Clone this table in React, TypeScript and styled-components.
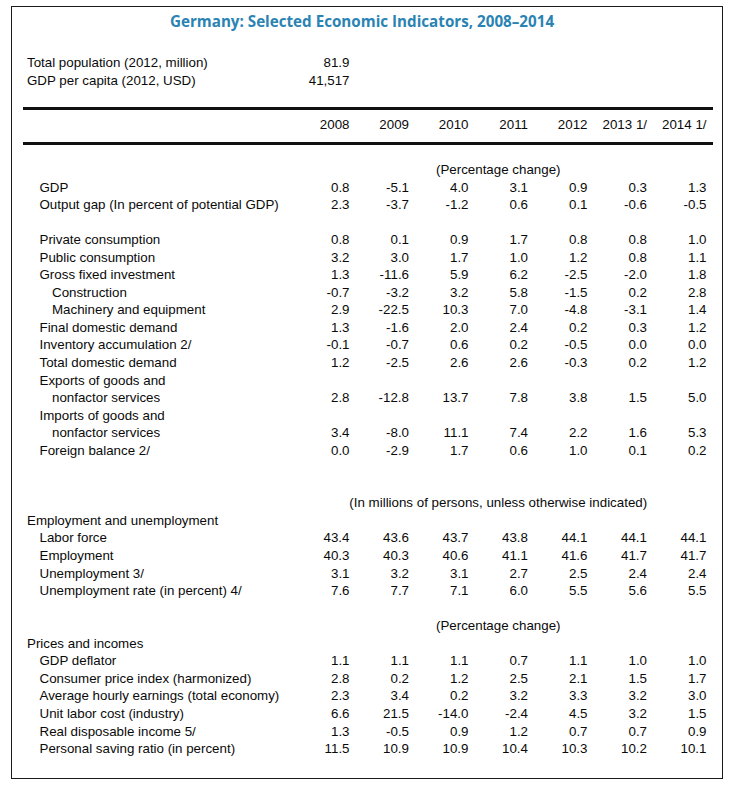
import React from "react";
import styled, { createGlobalStyle } from "styled-components";

const Global = createGlobalStyle`
  html, body { margin: 0; padding: 0; background: #fff; }
  body { font-family: "Liberation Sans", Arial, sans-serif; color: #0a0a0a; }
`;

const Frame = styled.div`
  box-sizing: border-box;
  margin: 6px 0 0 11px;
  width: 712px;
  height: 773px;
  border: 1px solid #1a1a1a;
  padding: 4px 9px 0 11px;
`;

const Title = styled.h1`
  margin: 0;
  font-family: "Open Sans", "Noto Sans", sans-serif;
  font-weight: 700;
  font-size: 15.2px;
  line-height: 20px;
  color: #2a83b3;
  text-align: center;
  padding-right: 12px;
`;

const Stats = styled.div`
  margin-top: 23px;
`;

const Grid = styled.div<{ $h?: number }>`
  display: grid;
  grid-template-columns: 267px repeat(7, 59.5px);
  font-size: 13.33px;
  line-height: ${(p) => p.$h ?? 17.55}px;
  height: ${(p) => p.$h ?? 17.55}px;
  white-space: nowrap;
`;

const Label = styled.div<{ $indent?: number }>`
  padding-left: ${(p) => 4 + (p.$indent ?? 0) * 12.5}px;
`;

const Cell = styled.div`
  text-align: right;
`;

const Note = styled.div`
  grid-column: 2 / -1;
  text-align: center;
`;

const Rule = styled.div<{ $top: number }>`
  height: 3px;
  background: #111;
  margin-top: ${(p) => p.$top}px;
`;

const Body = styled.div`
  margin-top: 16px;
`;

type Row =
  | { kind: "data"; label: string; indent: number; values?: string[] }
  | { kind: "note"; text: string }
  | { kind: "blank" };

const d = (label: string, indent: number, v?: string): Row => ({
  kind: "data",
  label,
  indent,
  values: v ? v.split(" ") : undefined,
});
const note = (text: string): Row => ({ kind: "note", text });
const blank: Row = { kind: "blank" };

const rows: Row[] = [
  note("(Percentage change)"),
  d("GDP", 1, "0.8 -5.1 4.0 3.1 0.9 0.3 1.3"),
  d("Output gap (In percent of potential GDP)", 1, "2.3 -3.7 -1.2 0.6 0.1 -0.6 -0.5"),
  blank,
  d("Private consumption", 1, "0.8 0.1 0.9 1.7 0.8 0.8 1.0"),
  d("Public consumption", 1, "3.2 3.0 1.7 1.0 1.2 0.8 1.1"),
  d("Gross fixed investment", 1, "1.3 -11.6 5.9 6.2 -2.5 -2.0 1.8"),
  d("Construction", 2, "-0.7 -3.2 3.2 5.8 -1.5 0.2 2.8"),
  d("Machinery and equipment", 2, "2.9 -22.5 10.3 7.0 -4.8 -3.1 1.4"),
  d("Final domestic demand", 1, "1.3 -1.6 2.0 2.4 0.2 0.3 1.2"),
  d("Inventory accumulation 2/", 1, "-0.1 -0.7 0.6 0.2 -0.5 0.0 0.0"),
  d("Total domestic demand", 1, "1.2 -2.5 2.6 2.6 -0.3 0.2 1.2"),
  d("Exports of goods and", 1),
  d("nonfactor services", 2, "2.8 -12.8 13.7 7.8 3.8 1.5 5.0"),
  d("Imports of goods and", 1),
  d("nonfactor services", 2, "3.4 -8.0 11.1 7.4 2.2 1.6 5.3"),
  d("Foreign balance 2/", 1, "0.0 -2.9 1.7 0.6 1.0 0.1 0.2"),
  blank,
  blank,
  note("(In millions of persons, unless otherwise indicated)"),
  d("Employment and unemployment", 0),
  d("Labor force", 1, "43.4 43.6 43.7 43.8 44.1 44.1 44.1"),
  d("Employment", 1, "40.3 40.3 40.6 41.1 41.6 41.7 41.7"),
  d("Unemployment 3/", 1, "3.1 3.2 3.1 2.7 2.5 2.4 2.4"),
  d("Unemployment rate (in percent) 4/", 1, "7.6 7.7 7.1 6.0 5.5 5.6 5.5"),
  blank,
  note("(Percentage change)"),
  d("Prices and incomes", 0),
  d("GDP deflator", 1, "1.1 1.1 1.1 0.7 1.1 1.0 1.0"),
  d("Consumer price index (harmonized)", 1, "2.8 0.2 1.2 2.5 2.1 1.5 1.7"),
  d("Average hourly earnings (total economy)", 1, "2.3 3.4 0.2 3.2 3.3 3.2 3.0"),
  d("Unit labor cost (industry)", 1, "6.6 21.5 -14.0 -2.4 4.5 3.2 1.5"),
  d("Real disposable income 5/", 1, "1.3 -0.5 0.9 1.2 0.7 0.7 0.9"),
  d("Personal saving ratio (in percent)", 1, "11.5 10.9 10.9 10.4 10.3 10.2 10.1"),
];

const years = ["2008", "2009", "2010", "2011", "2012", "2013 1/", "2014 1/"];

export default function App() {
  return (
    <>
      <Global />
      <Frame>
        <Title>Germany: Selected Economic Indicators, 2008–2014</Title>
        <Stats>
          <Grid $h={18}>
            <Label>Total population (2012, million)</Label>
            <Cell>81.9</Cell>
          </Grid>
          <Grid $h={18}>
            <Label>GDP per capita (2012, USD)</Label>
            <Cell>41,517</Cell>
          </Grid>
        </Stats>
        <Rule $top={17} />
        <Grid $h={18} style={{ marginTop: 6 }}>
          <Label />
          {years.map((y) => (
            <Cell key={y}>{y}</Cell>
          ))}
        </Grid>
        <Rule $top={8} />
        <Body>
          {rows.map((r, i) => {
            if (r.kind === "blank") return <Grid key={i} />;
            if (r.kind === "note")
              return (
                <Grid key={i}>
                  <Note>{r.text}</Note>
                </Grid>
              );
            return (
              <Grid key={i}>
                <Label $indent={r.indent}>{r.label}</Label>
                {r.values?.map((v, j) => (
                  <Cell key={j}>{v}</Cell>
                ))}
              </Grid>
            );
          })}
        </Body>
      </Frame>
    </>
  );
}
